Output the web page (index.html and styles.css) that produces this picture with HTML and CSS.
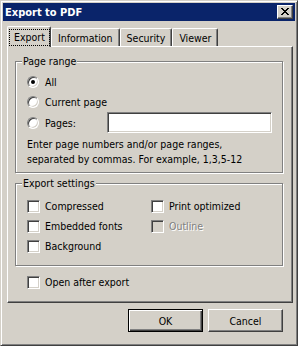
FILE: index.html
```html
<!DOCTYPE html>
<html lang="en">
<head>
    <meta charset="UTF-8">
    <title>Export to PDF</title>
    <link rel="stylesheet" href="styles.css">
</head>
<body>
    <div class="window">
        <div class="titlebar">
            <span class="title">Export to PDF</span>
            <span class="close">
                <svg width="8" height="7" viewBox="0 0 8 7"><path d="M0 0h2v1H0zM6 0h2v1H6zM1 1h2v1H1zM5 1h2v1H5zM2 2h4v1H2zM3 3h2v1H3zM2 4h4v1H2zM1 5h2v1H1zM5 5h2v1H5zM0 6h2v1H0zM6 6h2v1H6z" fill="#000"/></svg>
            </span>
        </div>
        <div class="client">
            <div class="tabs">
                <div class="tab selected"><span class="focus">Export</span></div>
                <div class="tab">Information</div>
                <div class="tab">Security</div>
                <div class="tab">Viewer</div>
            </div>
            <div class="panel">
                <fieldset class="group page-range">
                    <legend>Page range</legend>
                    <div class="option"><span class="radio checked"></span>All</div>
                    <div class="option"><span class="radio"></span>Current page</div>
                    <div class="option pages"><span class="radio"></span>Pages:<span class="field"></span></div>
                    <p class="hint">Enter page numbers and/or page ranges,<br>separated by commas. For example, 1,3,5-12</p>
                </fieldset>
                <fieldset class="group settings">
                    <legend>Export settings</legend>
                    <div class="grid">
                        <div class="option"><span class="check"></span>Compressed</div>
                        <div class="option"><span class="check"></span>Print optimized</div>
                        <div class="option"><span class="check"></span>Embedded fonts</div>
                        <div class="option disabled"><span class="check"></span>Outline</div>
                        <div class="option"><span class="check"></span>Background</div>
                    </div>
                </fieldset>
                <div class="option open-after"><span class="check"></span>Open after export</div>
            </div>
            <div class="buttons">
                <button class="btn default">OK</button>
                <button class="btn">Cancel</button>
            </div>
        </div>
    </div>
</body>
</html>
```

FILE: styles.css
```css
body {
    margin: 0;
    font-family: "DejaVu Sans Condensed", "Liberation Sans", sans-serif;
    font-size: 10.5px;
    color: #000;
}

.window {
    width: 298px;
    height: 346px;
    box-sizing: border-box;
    background-color: #d4d0c8;
    border: 1px solid;
    border-color: #d4d0c8 #404040 #404040 #d4d0c8;
    box-shadow: inset 1px 1px #fff, inset -1px -1px #808080;
    padding: 2px;
    display: flex;
    flex-direction: column;
}

.titlebar {
    height: 18px;
    background-color: #0a246a;
    color: #fff;
    display: flex;
    align-items: center;
    justify-content: space-between;
    padding: 0 2px;
}

.title {
    font-weight: bold;
    font-size: 11px;
}

.close {
    width: 16px;
    height: 14px;
    box-sizing: border-box;
    background-color: #d4d0c8;
    border: 1px solid;
    border-color: #fff #404040 #404040 #fff;
    box-shadow: inset -1px -1px #808080;
    display: flex;
    align-items: center;
    justify-content: center;
}

.close svg {
    display: block;
    margin: 0 1px 1px 0;
}

.client {
    flex: 1;
    display: flex;
    flex-direction: column;
    padding: 5px 2px 0 4px;
}

.tabs {
    height: 20px;
    display: flex;
    align-items: flex-end;
}

.tab {
    height: 18px;
    box-sizing: border-box;
    border: 1px solid;
    border-bottom: none;
    border-color: #fff #404040 #404040 #fff;
    border-radius: 2px 2px 0 0;
    box-shadow: inset -1px 0 #808080;
    padding: 0 6px;
    display: flex;
    align-items: center;
}

.tab.selected {
    height: 21px;
    margin-bottom: -1px;
    padding: 0 1px 0 2px;
    position: relative;
    z-index: 1;
    background-color: #d4d0c8;
}

.focus {
    outline: 1px dotted #000;
    padding: 0 4px;
    line-height: 15px;
}

.panel {
    height: 257px;
    box-sizing: border-box;
    border: 1px solid;
    border-color: #fff #404040 #404040 #fff;
    box-shadow: inset -1px -1px #808080;
    padding: 8px 9px 0 7px;
}

.group {
    margin: 0;
    border: 1px solid #808080;
    box-shadow: inset 1px 1px #fff, 1px 1px #fff;
    padding: 4px 10px 0 11px;
}

.group legend {
    margin-left: -5px;
    padding: 0 1px;
    line-height: 13px;
    background-color: #d4d0c8;
}

.option {
    height: 20px;
    display: flex;
    align-items: center;
    white-space: nowrap;
}

.radio {
    width: 12px;
    height: 12px;
    box-sizing: border-box;
    border-radius: 50%;
    border: 1px solid;
    border-color: #808080 #fff #fff #808080;
    box-shadow: inset 1px 1px #404040, inset -1px -1px #d4d0c8;
    background-color: #fff;
    margin-right: 6px;
    display: flex;
    align-items: center;
    justify-content: center;
}

.radio.checked::after {
    content: "";
    width: 4px;
    height: 4px;
    border-radius: 50%;
    background-color: #000;
}

.check {
    width: 13px;
    height: 13px;
    box-sizing: border-box;
    border: 1px solid;
    border-color: #808080 #fff #fff #808080;
    box-shadow: inset 1px 1px #404040, inset -1px -1px #d4d0c8;
    background-color: #fff;
    margin-right: 5px;
}

.pages {
    height: 21px;
}

.field {
    width: 165px;
    height: 21px;
    margin-left: auto;
    box-sizing: border-box;
    border: 1px solid;
    border-color: #808080 #fff #fff #808080;
    box-shadow: inset 1px 1px #404040, inset -1px -1px #d4d0c8;
    background-color: #fff;
}

.hint {
    margin: 4px 0 5px;
    line-height: 15px;
}

.settings {
    margin-top: 4px;
    padding-top: 6px;
    padding-bottom: 9px;
}

.grid {
    display: grid;
    grid-template-columns: 124px auto;
}

.disabled {
    color: #808080;
    text-shadow: 1px 1px #fff;
}

.disabled .check {
    background-color: #d4d0c8;
}

.open-after {
    margin: 6px 0 0 12px;
}

.buttons {
    display: flex;
    justify-content: flex-end;
    gap: 5px;
    padding: 6px 10px 0 0;
}

.btn {
    width: 75px;
    height: 23px;
    box-sizing: border-box;
    font: inherit;
    color: #000;
    background-color: #d4d0c8;
    border: 1px solid;
    border-color: #fff #404040 #404040 #fff;
    box-shadow: inset -1px -1px #808080;
    padding: 0;
}

.btn.default {
    border-color: #000;
    box-shadow: inset 1px 1px #fff, inset -1px -1px #404040, inset -2px -2px #808080;
}
```
